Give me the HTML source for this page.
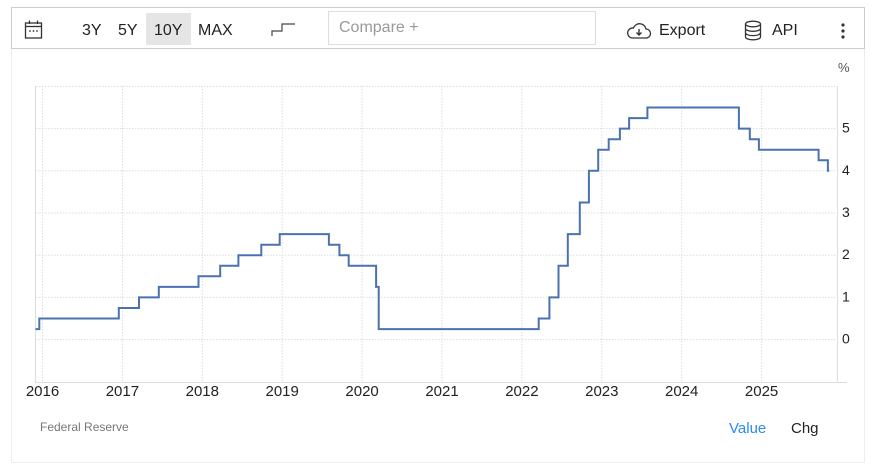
<!DOCTYPE html>
<html><head><meta charset="utf-8"><style>
body{margin:0;width:875px;height:470px;background:#fff;font-family:"Liberation Sans",sans-serif;position:relative;overflow:hidden}
.a{position:absolute}
.tb{left:11px;top:7px;width:852px;height:40px;border:1px solid #ccc;box-sizing:content-box}
.btn{top:14px;font-size:16px;color:#222;line-height:34px}
</style></head><body>
<div class="a" style="left:11px;top:48px;width:852px;height:414px;border:1px solid #eee;border-top:none"></div>
<div class="a tb"></div>
<svg class="a" style="left:24px;top:19px" width="20" height="22" viewBox="0 0 20 22"><rect x="1.5" y="4" width="16" height="15" fill="none" stroke="#333" stroke-width="1.3"/><line x1="1.5" y1="7.5" x2="17.5" y2="7.5" stroke="#333" stroke-width="1.3"/><line x1="5.5" y1="1.5" x2="5.5" y2="5" stroke="#333" stroke-width="1.3"/><line x1="13.5" y1="1.5" x2="13.5" y2="5" stroke="#333" stroke-width="1.3"/><circle cx="6" cy="12" r=".9" fill="#333"/><circle cx="9.5" cy="12" r=".9" fill="#333"/><circle cx="13" cy="12" r=".9" fill="#333"/></svg>
<div class="a btn" style="left:82px">3Y</div>
<div class="a btn" style="left:118px">5Y</div>
<div class="a" style="left:146px;top:13px;width:45px;height:32px;background:#e5e5e5"></div>
<div class="a btn" style="left:154px">10Y</div>
<div class="a btn" style="left:198px">MAX</div>
<svg class="a" style="left:271px;top:21px" width="26" height="16"><path d="M1 15V10h10V3h13" fill="none" stroke="#444" stroke-width="1.2"/></svg>
<div class="a" style="left:328px;top:11px;width:266px;height:32px;border:1px solid #ddd"></div>
<div class="a btn" style="left:339px;top:11px;color:#999">Compare +</div>
<svg class="a" style="left:626px;top:21px" width="26" height="20" viewBox="0 0 26 20"><path d="M6 17h14a4.5 4.5 0 0 0 0-9 6.5 6.5 0 0 0-12.5-1A5 5 0 0 0 6 17z" fill="none" stroke="#333" stroke-width="1.3"/><path d="M13 8v6M10.5 11.5l2.5 2.5 2.5-2.5" fill="none" stroke="#333" stroke-width="1.4"/></svg>
<div class="a btn" style="left:659px">Export</div>
<svg class="a" style="left:744px;top:20px" width="20" height="22" viewBox="0 0 20 22"><ellipse cx="9" cy="4" rx="7.5" ry="2.8" fill="none" stroke="#333" stroke-width="1.3"/><path d="M1.5 4v13c0 1.6 3.4 2.8 7.5 2.8s7.5-1.2 7.5-2.8V4M1.5 8.5c0 1.6 3.4 2.8 7.5 2.8s7.5-1.2 7.5-2.8M1.5 12.8c0 1.6 3.4 2.8 7.5 2.8s7.5-1.2 7.5-2.8" fill="none" stroke="#333" stroke-width="1.3"/></svg>
<div class="a btn" style="left:772px">API</div>
<svg class="a" style="left:840px;top:22px" width="6" height="18"><circle cx="3" cy="3" r="1.6" fill="#333"/><circle cx="3" cy="9" r="1.6" fill="#333"/><circle cx="3" cy="15" r="1.6" fill="#333"/></svg>
<div class="a" style="left:838px;top:60px;font-size:13px;color:#555">%</div>
<svg class="a" id="ch" style="left:0;top:0" width="875" height="470"></svg>
<div class="a" style="left:40px;top:420px;font-size:12px;color:#777">Federal Reserve</div>
<div class="a" style="left:729px;top:420px;font-size:15px;color:#2a8bf2">Value</div>
<div class="a" style="left:791px;top:420px;font-size:15px;color:#222">Chg</div>
<script>
var s='',X=function(t){return 42.5+79.9*(t-2016)},Y=function(v){return 339.6-42.2*v};
for(var y=2016;y<=2025;y++){var x=X(y);s+='<line x1="'+x+'" y1="86" x2="'+x+'" y2="382" stroke="#ddd" stroke-dasharray="1.5,1.5"/>';s+='<text x="'+x+'" y="396" font-size="15" fill="#222" text-anchor="middle" font-family="Liberation Sans">'+y+'</text>';}
for(var v=0;v<=6;v++){s+='<line x1="36" y1="'+Y(v)+'" x2="837" y2="'+Y(v)+'" stroke="#ddd" stroke-dasharray="1.5,1.5"/>';if(v<6)s+='<text x="842" y="'+(Y(v)+4)+'" font-size="14" fill="#222" font-family="Liberation Sans">'+v+'</text>';}
s+='<line x1="35.5" y1="86" x2="35.5" y2="382" stroke="#ddd"/><line x1="837.5" y1="86" x2="837.5" y2="382" stroke="#ddd"/><line x1="35" y1="382.5" x2="847" y2="382.5" stroke="#ddd"/>';
var d=[[2015,11,20,.25],[2015,12,16,.5],[2016,12,14,.75],[2017,3,15,1],[2017,6,14,1.25],[2017,12,13,1.5],[2018,3,21,1.75],[2018,6,13,2],[2018,9,26,2.25],[2018,12,19,2.5],[2019,7,31,2.25],[2019,9,18,2],[2019,10,30,1.75],[2020,3,3,1.25],[2020,3,15,.25],[2022,3,16,.5],[2022,5,4,1],[2022,6,15,1.75],[2022,7,27,2.5],[2022,9,21,3.25],[2022,11,2,4],[2022,12,14,4.5],[2023,2,1,4.75],[2023,3,22,5],[2023,5,3,5.25],[2023,7,26,5.5],[2024,9,18,5],[2024,11,7,4.75],[2024,12,18,4.5],[2025,9,17,4.25],[2025,10,29,4],[2025,11,5,4]];
function T(a){return a[0]+((a[1]-1)*30.44+a[2])/365.25}
var p='M35.5 '+Y(.25).toFixed(1),prev=.25;
for(var i=1;i<d.length;i++){var x=X(T(d[i])).toFixed(1);p+=' L'+x+' '+Y(prev).toFixed(1)+' L'+x+' '+Y(d[i][3]).toFixed(1);prev=d[i][3];}
s+='<path d="'+p+'" fill="none" stroke="#4a72b0" stroke-width="2"/>';
document.getElementById('ch').innerHTML=s;
</script>
</body></html>
